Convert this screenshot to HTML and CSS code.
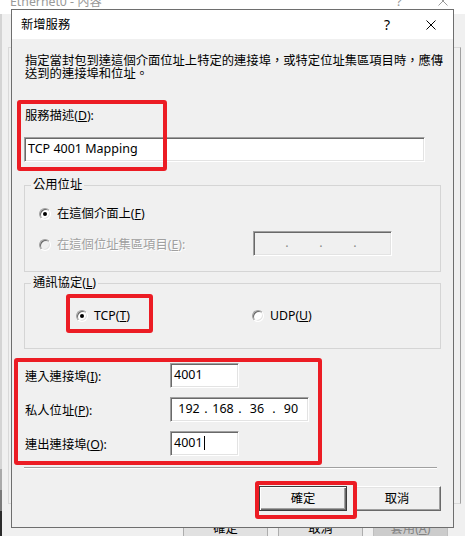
FILE: index.html
```html
<!DOCTYPE html>
<html lang="zh-Hant">
<head>
<meta charset="utf-8">
<title>新增服務</title>
<link rel="stylesheet" href="styles.css">
</head>
<body>
<div class="desk">
  <div class="bgwin">
    <div class="bg-title">
      <span class="bg-title-text">Ethernet0 - 內容</span>
      <span class="bg-help">?</span>
      <svg class="bg-close" width="10" height="10" viewBox="0 0 10 10"><path d="M0.5 0.5L9.5 9.5M9.5 0.5L0.5 9.5" stroke="#9a9a9a" stroke-width="1"/></svg>
    </div>
    <div class="bg-body">
      <div class="bg-tabpage"></div>
      <div class="bg-buttons">
        <div class="bg-btn">確定</div>
        <div class="bg-btn">取消</div>
        <div class="bg-btn bg-dis">套用(<u>A</u>)</div>
      </div>
    </div>
  </div>

  <div class="dialog">
    <div class="titlebar">
      <span class="title">新增服務</span>
      <span class="help">?</span>
      <svg class="close" width="10" height="10" viewBox="0 0 10 10"><path d="M0.5 0.5L9.5 9.5M9.5 0.5L0.5 9.5" stroke="#000" stroke-width="1"/></svg>
    </div>
    <div class="body">
      <p class="desc">指定當封包到達這個介面位址上特定的連接埠，或特定位址集區項目時，應傳<br>送到的連接埠和位址。</p>
      <div class="label desc-label">服務描述(<u>D</u>):</div>
      <div class="field wide">TCP 4001 Mapping</div>

      <fieldset class="group g1">
        <legend>公用位址</legend>
        <div class="row r1">
          <span class="radio on"></span><span>在這個介面上(<u>F</u>)</span>
        </div>
        <div class="row r2">
          <div class="opt opt-pool"><span class="radio dis"></span><span class="dis-text">在這個位址集區項目(<u>E</u>):</span></div>
          <div class="field ipbox ip-dis">
            <span class="ipf"></span><span class="ipd">.</span><span class="ipf"></span><span class="ipd">.</span><span class="ipf"></span><span class="ipd">.</span><span class="ipf"></span>
          </div>
        </div>
      </fieldset>

      <fieldset class="group g2">
        <legend>通訊協定(<u>L</u>)</legend>
        <div class="row r3">
          <div class="opt opt-tcp"><span class="radio on"></span><span>TCP(<u>T</u>)</span></div>
          <div class="opt"><span class="radio"></span><span>UDP(<u>U</u>)</span></div>
        </div>
      </fieldset>

      <div class="ports">
        <div class="label plabel">連入連接埠(<u>I</u>):</div>
        <div class="field port">4001</div>
        <div class="label plabel">私人位址(<u>P</u>):</div>
        <div class="field ipbox ip-main">
          <span class="ipf">192</span><span class="ipd">.</span><span class="ipf">168</span><span class="ipd">.</span><span class="ipf">36</span><span class="ipd">.</span><span class="ipf">90</span>
        </div>
        <div class="label plabel">連出連接埠(<u>O</u>):</div>
        <div class="field port">4001<span class="caret"></span></div>
      </div>

      <div class="sep"></div>

      <div class="buttons">
        <div class="btn default">確定</div>
        <div class="btn">取消</div>
      </div>
    </div>
  </div>

  <div class="mark m1"></div>
  <div class="mark m2"></div>
  <div class="mark m3"></div>
  <div class="mark m4"></div>
</div>
</body>
</html>
```

FILE: styles.css
```css
* { box-sizing: border-box; }
html, body { margin: 0; padding: 0; }
body {
  width: 465px;
  height: 536px;
  overflow: hidden;
  background: #f0f0f0;
  font-family: "Noto Sans", "Noto Sans CJK TC", sans-serif;
  font-size: 12.3px;
  color: #000;
}
u { text-decoration: underline; text-underline-offset: 1px; }

.desk { position: relative; width: 465px; height: 536px; overflow: hidden; }

/* background window */
.bgwin { width: 465px; height: 536px; display: flex; flex-direction: column; }
.bg-title {
  height: 14px;
  background: #fff;
  display: flex;
  align-items: flex-start;
  color: #999;
  flex: none;
}
.bg-title-text { margin: -5px 0 0 10px; line-height: 14px; }
.bg-help { margin: -6px 0 0 auto; line-height: 14px; font-size: 13px; }
.bg-close { margin: -4px 17px 0 36px; }
.bg-body {
  flex: 1;
  display: flex;
  flex-direction: column;
  background: linear-gradient(to bottom, #d4d4d4 0, #d4d4d4 455px, #a9a9a9 455px, #a9a9a9 476px, #7a7a7a 476px, #7a7a7a 497px, #2b2b2b 497px) left top / 2px 100% no-repeat, #f0f0f0;
}
.bg-tabpage {
  margin: 33px 0 0 8px;
  width: 453px;
  height: 457px;
  border: 1px solid #d9d9d9;
  border-right-color: #a0a0a0;
  flex: none;
}
.bg-buttons { display: flex; gap: 10px; margin: 12px 0 0 183px; }
.bg-btn {
  width: 85px;
  height: 25px;
  border: 1px solid #adadad;
  background: #e1e1e1;
  display: flex;
  align-items: center;
  justify-content: center;
  line-height: 14px;
}
.bg-btn.bg-dis { width: 75px; background: #cccccc; border-color: #bfbfbf; color: #838383; }

/* dialog */
.dialog {
  position: absolute;
  left: 11px;
  top: 9px;
  width: 443px;
  height: 519px;
  border: 1px solid #6e6e6e;
  background: #f0f0f0;
  display: flex;
  flex-direction: column;
}
.titlebar {
  height: 29px;
  background: #fff;
  display: flex;
  align-items: center;
  padding-left: 9px;
  flex: none;
}
.title { line-height: 14px; }
.help { margin-left: auto; font-size: 14px; line-height: 14px; }
.close { margin: 0 17px 0 36px; }

.body { flex: 1; padding: 16px 12px 0 12px; }
.desc { margin: 0 0 0 1px; line-height: 12.5px; white-space: nowrap; }
.label { line-height: 14px; white-space: nowrap; }
.desc-label { margin: 29px 0 0 1px; }

.field {
  height: 25px;
  background: #fff;
  border: 1px solid;
  border-color: #a0a0a0 #fff #fff #a0a0a0;
  box-shadow: inset 1px 1px 0 #696969, inset -1px -1px 0 #e3e3e3;
  display: flex;
  align-items: center;
  padding: 0 0 2px 3px;
  font-size: 12.5px;
  line-height: 14px;
  white-space: nowrap;
}
.wide { width: 401px; margin-top: 14px; }

.group {
  margin: 16px 0 0 0;
  padding: 14px 0 15px 0;
  border: 1px solid #d5d5d5;
  width: 417px;
  min-width: 0;
}
.group legend { padding: 0 2px; margin-left: 6px; line-height: 14px; }
.g2 { margin-top: 4px; padding: 18px 0 24px 0; }

.row { display: flex; align-items: center; white-space: nowrap; }
.r1 { height: 16px; padding-left: 14px; }
.r2 { height: 25px; margin-top: 9px; padding-left: 14px; }
.r3 { height: 16px; padding-left: 51px; }
.opt { display: flex; align-items: center; line-height: 14px; }
.opt-pool { width: 214px; padding-top: 3px; }
.opt-tcp { width: 176px; }
.r1 span { line-height: 14px; }

.radio {
  width: 12px;
  height: 12px;
  flex: none;
  border-radius: 50%;
  background: #fff;
  border: 1px solid;
  border-color: #a0a0a0 #fff #fff #a0a0a0;
  box-shadow: inset 1px 1px 0 #696969, inset -1px -1px 0 #e3e3e3;
  display: flex;
  align-items: center;
  justify-content: center;
  margin-right: 6px;
}
.radio.on::after { content: ""; width: 4px; height: 4px; border-radius: 50%; background: #000; }
.radio.dis { background: #f0f0f0; }
.dis-text { color: #a0a0a0; text-shadow: 1px 1px 0 #fff; }

.ipbox { padding: 0 0 2px 0; }
.ipf { width: 24px; text-align: center; flex: none; }
.ipd { width: 10px; text-align: center; flex: none; }
.ip-dis { width: 139px; background: #f0f0f0; padding-left: 4px; color: #8a8a8a; }
.ip-main { width: 139px; padding-left: 6px; }

.ports {
  margin-top: 14px;
  display: grid;
  grid-template-columns: 146px auto;
  row-gap: 9px;
  justify-items: start;
  align-items: center;
}
.plabel { padding: 3px 0 0 1px; }
.port { width: 69px; }
.caret { display: inline-block; width: 1px; height: 14px; background: #000; margin-left: 1px; }

.sep { margin-top: 11px; width: 413px; border-top: 1px solid #a0a0a0; border-bottom: 1px solid #fff; }

.buttons { margin-top: 17px; display: flex; justify-content: flex-end; gap: 6px; }
.btn {
  width: 88px;
  height: 25px;
  background: #f0f0f0;
  border: 1px solid;
  border-color: #fff #696969 #696969 #fff;
  box-shadow: inset -1px -1px 0 #a0a0a0, inset 1px 1px 0 #e3e3e3;
  display: flex;
  align-items: center;
  justify-content: center;
  line-height: 14px;
}
.btn.default {
  border: 1px solid #3c3c3c;
  box-shadow: inset 1px 1px 0 #fff, inset -1px -1px 0 #696969, inset -2px -2px 0 #a0a0a0;
}

/* red annotation boxes */
.mark {
  position: absolute;
  border: 4px solid #ec1c24;
  border-radius: 3px;
}
.m1 { left: 17px; top: 100px; width: 150px; height: 71px; }
.m2 { left: 66px; top: 294px; width: 87px; height: 39px; }
.m3 { left: 14px; top: 358px; width: 308px; height: 107px; }
.m4 { left: 255px; top: 481px; width: 102px; height: 38px; }
```
